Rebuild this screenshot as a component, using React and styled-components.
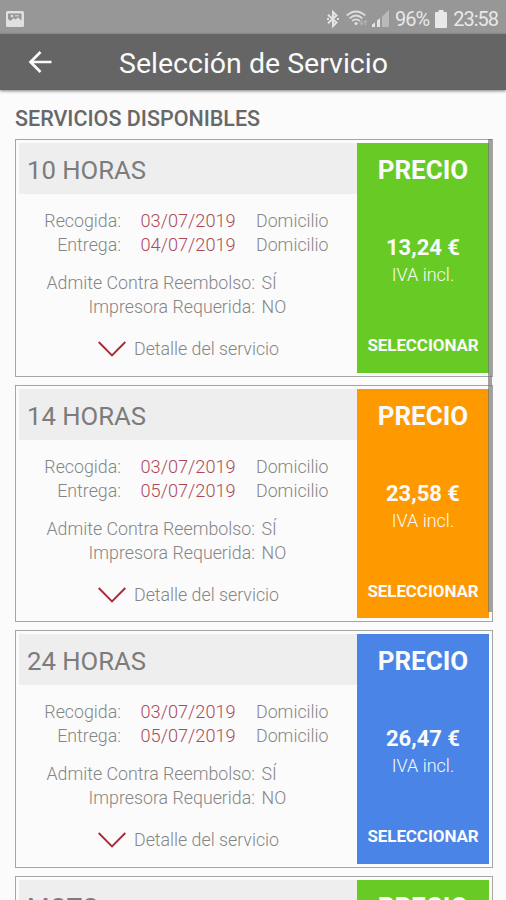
import React from 'react'
import styled, { createGlobalStyle } from 'styled-components'

const services = [
  { name: '10 HORAS', pickup: '03/07/2019', delivery: '04/07/2019', price: '13,24 €', color: '#68cb25' },
  { name: '14 HORAS', pickup: '03/07/2019', delivery: '05/07/2019', price: '23,58 €', color: '#fe9900' },
  { name: '24 HORAS', pickup: '03/07/2019', delivery: '05/07/2019', price: '26,47 €', color: '#4984e6' },
  { name: 'MOTO', color: '#68cb25' },
]

const PictureIcon = () => (
  <svg width="18" height="16" viewBox="0 0 18 16">
    <rect x="0" y="0" width="18" height="16" rx="1.5" fill="#e0e0e0" />
    <path d="M2 2.500h13.500v7l-3.500-3-2.500 2-2-1.500-3 3-2.500-2z" fill="#969696" />
    <circle cx="6" cy="5" r="1.300" fill="#e0e0e0" />
    <path d="M9 4h4v1.500H9z" fill="#c8c8c8" />
  </svg>
)

const BluetoothIcon = () => (
  <svg width="12" height="18" viewBox="0 0 12 18" fill="none" stroke="#e4e4e4" strokeWidth="2">
    <path d="M1 4.800l8.500 7.700L6 16V2l3.500 3.500L1 13.200" />
    <path d="M0 9h2M10 9h2" />
  </svg>
)

const WifiIcon = () => (
  <svg width="22" height="17" viewBox="0 0 22 17" fill="none" stroke="#dedede" strokeWidth="1.700">
    <path d="M.8 5.500Q10 -2.500 19.200 5.500M3.600 8.300Q10 2.700 16.400 8.300M6.200 11Q10 7.800 13.800 11" />
    <circle cx="10" cy="13.500" r="1.600" fill="#e4e4e4" stroke="none" />
    <path d="M15.500 9.500v5M13.500 12.500l2 2 2-2M19.500 15.500v-5M17.800 12.200l1.700-1.700 1.700 1.700" stroke="#b0b0b0" strokeWidth="1.300" />
  </svg>
)

const SignalIcon = () => (
  <svg width="17" height="17" viewBox="0 0 17 17">
    <path d="M0 17v-2.500l3-2V17zM5 17v-6.500l3-2.500v9z" fill="#e4e4e4" />
    <path d="M10 17V6.500l2.500-2V17zM12.500 17V4L17 0v17z" fill="#b9b9b9" />
  </svg>
)

const BatteryIcon = () => (
  <svg width="12" height="18" viewBox="0 0 12 18">
    <path d="M3.500 0h5v2H11q1 0 1 1v14q0 1-1 1H1q-1 0-1-1V3q0-1 1-1h2.500z" fill="#e8e8e8" />
  </svg>
)

const App = () => {
  return (
    <Screen>
      <GlobalStyle />
      <StatusBar>
        <PictureIcon />
        <StatusRight>
          <Connections>
            <BluetoothIcon />
            <WifiIcon />
          </Connections>
          <SignalIcon />
          <StatusText>96%</StatusText>
          <BatteryIcon />
          <StatusText>23:58</StatusText>
        </StatusRight>
      </StatusBar>
      <Toolbar>
        <BackButton aria-label="Atrás">
          <svg width="24" height="22" viewBox="0 0 24 22" fill="none" stroke="#fafafa" strokeWidth="2.700">
            <path d="M23.500 11H2.500M12.500 1L2.500 11l10 10" />
          </svg>
        </BackButton>
        <Title>Selección de Servicio</Title>
      </Toolbar>
      <Heading>SERVICIOS DISPONIBLES</Heading>
      <List>
        {services.map((s) => (
          <Card key={s.name}>
            <Info>
              <Name>{s.name}</Name>
              {s.price && (
                <>
                  <Dates>
                    <Label>Recogida:</Label>
                    <DateText>{s.pickup}</DateText>
                    <span>Domicilio</span>
                    <Label>Entrega:</Label>
                    <DateText>{s.delivery}</DateText>
                    <span>Domicilio</span>
                  </Dates>
                  <Options>
                    <Label>Admite Contra Reembolso:</Label>
                    <span>SÍ</span>
                    <Label>Impresora Requerida:</Label>
                    <span>NO</span>
                  </Options>
                  <Detail>
                    <svg width="28" height="16" viewBox="0 0 28 16" fill="none" stroke="#a52c38" strokeWidth="1.900">
                      <path d="M.7 1L14 14.500 27.300 1" />
                    </svg>
                    Detalle del servicio
                  </Detail>
                </>
              )}
            </Info>
            <PriceBox $color={s.color}>
              <PriceTitle>PRECIO</PriceTitle>
              {s.price && (
                <>
                  <Price>{s.price}</Price>
                  <Tax>IVA incl.</Tax>
                  <Select>SELECCIONAR</Select>
                </>
              )}
            </PriceBox>
          </Card>
        ))}
        <ScrollThumb />
      </List>
    </Screen>
  )
}

const GlobalStyle = createGlobalStyle`
  * { box-sizing: border-box; }
  body {
    margin: 0;
    overflow: hidden;
    background: #fbfbfb;
  }
`

const Screen = styled.div`
  width: 506px;
  height: 900px;
  overflow: hidden;
  background: #fbfbfb;
  color: #858585;
  font-family: Roboto, "Liberation Sans", sans-serif;
`

const StatusBar = styled.div`
  display: flex;
  align-items: center;
  justify-content: space-between;
  height: 34px;
  padding: 3px 8px 0 6px;
  background: #979797;
`

const StatusRight = styled.div`
  display: flex;
  align-items: center;
  gap: 6px;
`

const Connections = styled.div`
  display: flex;
  align-items: center;
  gap: 7px;
  margin-right: -2px;
`

const StatusText = styled.span`
  color: #e8e8e8;
  font-size: 20px;
  letter-spacing: -1px;
  line-height: 20px;
`

const Toolbar = styled.header`
  display: flex;
  align-items: center;
  height: 56px;
  padding-left: 28px;
  background: #656565;
  box-shadow: 0 1px 3px rgba(0, 0, 0, 0.5);
`

const BackButton = styled.button`
  display: flex;
  padding: 0;
  border: none;
  background: none;
`

const Title = styled.h1`
  margin: 4px 0 0 67px;
  color: #fafafa;
  font-size: 28.500px;
  font-weight: 400;
  line-height: 32px;
`

const Heading = styled.h2`
  margin: 17px 0 0 15px;
  color: #686868;
  font-size: 21.500px;
  font-weight: 500;
  line-height: 24px;
`

const List = styled.main`
  position: relative;
  display: flex;
  flex-direction: column;
  gap: 7.800px;
  padding: 8.400px 13px 0 15px;
`

const Card = styled.section`
  display: flex;
  flex: none;
  height: 237.600px;
  padding: 3px;
  border: 1px solid #a5a5a5;
`

const Info = styled.div`
  flex: 1;
  font-size: 17.800px;
  font-weight: 300;
  line-height: 24px;
`

const Name = styled.h3`
  height: 51px;
  margin: 0;
  padding-left: 8px;
  background: #eeeeee;
  color: #7c7c7c;
  font-size: 25.700px;
  font-weight: 400;
  line-height: 54px;
`

const Dates = styled.div`
  display: grid;
  grid-template-columns: 102px 96px auto;
  column-gap: 19.500px;
  margin-top: 15px;
`

const Label = styled.span`
  text-align: right;
`

const DateText = styled.span`
  color: #ac4a57;
  font-size: 18.200px;
`

const Options = styled.div`
  display: grid;
  grid-template-columns: 236px auto;
  column-gap: 6.500px;
  margin-top: 14px;
`

const Detail = styled.div`
  display: flex;
  align-items: center;
  gap: 8px;
  margin: 18px 0 0 79px;
`

const PriceBox = styled.div`
  display: flex;
  flex-direction: column;
  align-items: center;
  width: 132px;
  background: ${(p) => p.$color};
  color: #fafafa;
`

const PriceTitle = styled.div`
  margin-top: 12px;
  font-size: 26px;
  font-weight: 700;
  line-height: 30px;
`

const Price = styled.div`
  margin-top: 50px;
  font-size: 22px;
  font-weight: 700;
  line-height: 26px;
`

const Tax = styled.div`
  margin-top: 2px;
  font-size: 18px;
  font-weight: 300;
  line-height: 24px;
`

const Select = styled.button`
  margin-top: 46px;
  padding: 0;
  border: none;
  background: none;
  color: inherit;
  font: 700 17px/24px Roboto, "Liberation Sans", sans-serif;
  letter-spacing: -0.100px;
`

const ScrollThumb = styled.div`
  position: absolute;
  top: 8px;
  right: 14px;
  width: 4px;
  height: 473px;
  background: rgba(110, 110, 110, 0.65);
`

export default App
